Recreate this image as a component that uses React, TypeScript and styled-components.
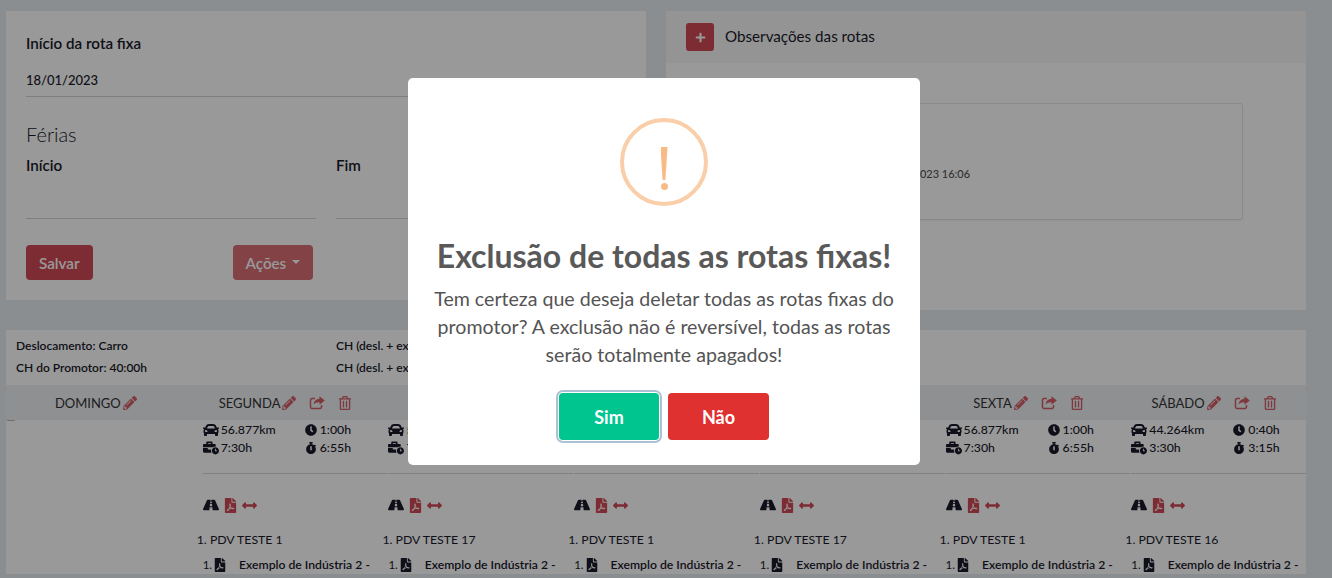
import React from "react";
import styled, { createGlobalStyle } from "styled-components";
import {
  FaBusinessTime,
  FaCar,
  FaClock,
  FaFilePdf,
  FaPencilAlt,
  FaPlus,
  FaRegTrashAlt,
  FaRoad,
  FaStopwatch,
  FaArrowsAltH,
} from "react-icons/fa";

const RED = "#d04a55";

const GlobalStyle = createGlobalStyle`
  html, body {
    margin: 0;
    padding: 0;
    height: 100%;
    overflow: hidden;
    background: #e8edf2;
    font-family: Lato, "Open Sans", sans-serif;
    color: #1a1a2b;
  }
  * { box-sizing: border-box; }
`;

const Page = styled.div`
  width: 1332px;
  height: 578px;
  padding: 11px 26px 0 6px;
  overflow: hidden;
`;

const TopRow = styled.div`
  display: grid;
  grid-template-columns: 640px 640px;
  gap: 20px;
  align-items: start;
`;

const FormCard = styled.section`
  height: 289px;
  padding: 23px 20px 0;
  background: #fff;
`;

const Label = styled.div`
  font-size: 15.2px;
  line-height: 18px;
  font-weight: 600;
`;

const DateValue = styled.div`
  margin-top: 18px;
  padding-bottom: 6px;
  font-size: 13px;
  line-height: 20px;
  font-weight: 500;
  border-bottom: 1px solid #cfd2d6;
`;

const SectionTitle = styled.h3`
  margin: 25px 0 0;
  font-size: 20px;
  line-height: 24px;
  font-weight: 300;
`;

const DateFields = styled.div`
  display: grid;
  grid-template-columns: 290px 290px;
  gap: 20px;
`;

const DateField = styled.div`
  height: 63px;
  margin-top: 10px;
  border-bottom: 1px solid #cfd2d6;
`;

const ButtonRow = styled.div`
  display: flex;
  gap: 140px;
  margin-top: 26px;
`;

const ActionButton = styled.button<{ $faded?: boolean }>`
  display: flex;
  align-items: center;
  gap: 6px;
  height: 35px;
  padding: 0 13px;
  border: 0;
  border-radius: 4px;
  background: ${RED};
  opacity: ${(p) => (p.$faded ? 0.8 : 1)};
  color: #fff;
  font-family: inherit;
  font-size: 15.2px;
  font-weight: 600;
`;

const Caret = styled.span`
  border-top: 4px solid #fff;
  border-left: 4px solid transparent;
  border-right: 4px solid transparent;
  margin-top: -2px;
`;

const NotesCard = styled.section`
  height: 299px;
  background: #fff;
`;

const NotesHeader = styled.header`
  display: flex;
  align-items: center;
  gap: 11px;
  height: 52px;
  padding: 0 20px;
  background: #f7f7f7;
`;

const NotesTitle = styled.span`
  margin-bottom: 3px;
  font-size: 15.2px;
`;

const PlusButton = styled.span`
  display: flex;
  align-items: center;
  justify-content: center;
  width: 28px;
  height: 28px;
  border-radius: 3px;
  background: ${RED};
  color: #fff;
  font-size: 11px;
`;

const NoteBox = styled.div`
  display: flex;
  align-items: center;
  width: 537px;
  height: 117px;
  margin: 40px 0 0 40px;
  padding: 23px 0 0 171px;
  border: 1px solid #e4e4e4;
  border-radius: 3px;
  box-shadow: 0 1px 2px rgba(0, 0, 0, 0.05);
  font-size: 11px;
  font-weight: 500;
  color: #555;
`;

const RoutesCard = styled.section`
  margin-top: 20px;
  background: #fff;
`;

const Summary = styled.div`
  display: grid;
  grid-template-columns: 320px 1fr;
  padding: 5px 10px 6px;
  font-size: 12px;
  line-height: 22px;
  font-weight: 600;
`;

const WeekHeader = styled.div`
  position: relative;
  display: grid;
  grid-template-columns: repeat(7, 1fr);
  height: 35px;
  background: #edf0f3;

  &::after {
    content: "";
    position: absolute;
    left: 1px;
    bottom: -1px;
    width: 8px;
    height: 1px;
    background: #b5b8bb;
  }
`;

const DayCell = styled.div<{ $inset?: number }>`
  display: flex;
  align-items: center;
  justify-content: center;
  padding-left: 2px;
  padding-right: ${(p) => p.$inset ?? 0}px;
  font-size: 13px;
  font-weight: 400;
  color: #333;
`;

const DayIcon = styled.span<{ $gap?: number }>`
  display: inline-flex;
  margin-left: ${(p) => p.$gap ?? 2}px;
  color: ${RED};
  font-size: 14px;
  opacity: 0.88;
`;

const ShareGlyph = styled.svg`
  width: 16px;
  height: 14px;
  fill: none;
  stroke: currentColor;
  stroke-width: 1.5;
`;

const ShareArrow = styled.path`
  fill: currentColor;
  stroke: none;
`;

const WeekBody = styled.div`
  display: grid;
  grid-template-columns: repeat(7, 1fr);
  overflow: hidden;
`;

const DayColumn = styled.div`
  min-width: 0;
`;

const Stats = styled.div`
  display: grid;
  grid-template-columns: 102px 1fr;
  align-content: start;
  margin: 0 -10px 0 11px;
  padding-top: 1px;
  height: 54px;
  font-size: 12.3px;
  line-height: 18px;
  font-weight: 500;
  border-bottom: 1px solid #d8d8d8;
`;

const Stat = styled.span<{ $small?: boolean }>`
  display: flex;
  align-items: center;
  gap: ${(p) => (p.$small ? 3 : 2)}px;
  white-space: nowrap;

  svg {
    font-size: ${(p) => (p.$small ? 12 : 16)}px;
    flex: none;
  }
`;

const RouteTools = styled.div`
  display: flex;
  align-items: center;
  gap: 4px;
  margin: 22px 0 0 11px;
  height: 18px;
  font-size: 15px;
`;

const Tool = styled.span<{ $red?: boolean; $size?: number }>`
  display: inline-flex;
  font-size: ${(p) => p.$size ?? 15}px;
  color: ${(p) => (p.$red ? RED : "#1a1a2b")};
`;

const StopName = styled.div`
  margin: 16px 0 0 5px;
  font-size: 12.3px;
  line-height: 20px;
  white-space: nowrap;
`;

const Industry = styled.div`
  display: flex;
  align-items: center;
  margin: 6px 0 0 11px;
  font-size: 11.5px;
  line-height: 18px;
  white-space: nowrap;
`;

const IndustryIcon = styled.span`
  display: inline-flex;
  margin: 0 12px 0 1px;
  font-size: 14px;
`;

const IndustryName = styled.span`
  font-size: 12.2px;
  font-weight: 600;
`;

const Overlay = styled.div`
  position: fixed;
  inset: 0;
  display: flex;
  justify-content: center;
  align-items: flex-start;
  padding: 78px 4px 0 0;
  background: rgba(0, 0, 0, 0.4);
`;

const Modal = styled.div`
  display: flex;
  flex-direction: column;
  align-items: center;
  width: 512px;
  height: 387px;
  padding-top: 40px;
  border-radius: 5px;
  background: #fff;
  text-align: center;
`;

const AlertIcon = styled.div`
  display: flex;
  flex-direction: column;
  align-items: center;
  width: 88px;
  height: 88px;
  padding-top: 25px;
  border: 4px solid #facea8;
  border-radius: 50%;
`;

const AlertBar = styled.span`
  width: 7px;
  height: 33px;
  background: #f8bb86;
  clip-path: polygon(0 0, 100% 0, 70% 100%, 30% 100%);
`;

const AlertDot = styled.span`
  width: 7px;
  height: 7px;
  margin-top: 3px;
  border-radius: 50%;
  background: #f8bb86;
`;

const ModalTitle = styled.h2`
  margin: 32px 0 0;
  font-size: 32px;
  line-height: 36px;
  font-weight: 700;
  color: #595959;
`;

const ModalText = styled.p`
  margin: 11px 0 0;
  width: 470px;
  font-size: 19.6px;
  line-height: 28px;
  font-weight: 400;
  color: #545454;
`;

const ModalActions = styled.div`
  display: flex;
  gap: 9px;
  margin-top: 24px;
`;

const ModalButton = styled.button<{ $tone: string; $focused?: boolean }>`
  width: ${(p) => (p.$focused ? "100px" : "101px")};
  height: 47px;
  border: 0;
  border-radius: 4px;
  background: ${(p) => p.$tone};
  box-shadow: ${(p) => (p.$focused ? "0 0 0 1px #fff, 0 0 0 3px rgba(50, 100, 150, 0.4)" : "none")};
  color: #fff;
  font-family: inherit;
  font-size: 18px;
  font-weight: 700;
`;

type DayRoute = {
  km: string;
  travel: string;
  work: string;
  visit: string;
  stop: string;
};

const routes: DayRoute[] = [
  { km: "56.877km", travel: "1:00h", work: "7:30h", visit: "6:55h", stop: "PDV TESTE 1" },
  { km: "56.877km", travel: "1:00h", work: "7:30h", visit: "6:55h", stop: "PDV TESTE 17" },
  { km: "56.877km", travel: "1:00h", work: "7:30h", visit: "6:55h", stop: "PDV TESTE 1" },
  { km: "56.877km", travel: "1:00h", work: "7:30h", visit: "6:55h", stop: "PDV TESTE 17" },
  { km: "56.877km", travel: "1:00h", work: "7:30h", visit: "6:55h", stop: "PDV TESTE 1" },
  { km: "44.264km", travel: "0:40h", work: "3:30h", visit: "3:15h", stop: "PDV TESTE 16" },
];

const days = ["SEGUNDA", "TERÇA", "QUARTA", "QUINTA", "SEXTA", "SÁBADO"];

const ShareIcon = () => (
  <ShareGlyph viewBox="0 0 16 14">
    <path d="M6 2.5H3A1.5 1.5 0 0 0 1.5 4v7A1.5 1.5 0 0 0 3 12.5h8a1.5 1.5 0 0 0 1.5-1.5V9" />
    <ShareArrow d="M15.8 4.5 10.5.3v2.4C7 2.9 4.8 5 4.5 8.8 6 6.8 8 6.2 10.5 6.3v2.4z" />
  </ShareGlyph>
);

export default function App() {
  return (
    <>
      <GlobalStyle />
      <Page>
        <TopRow>
          <FormCard>
            <Label>Início da rota fixa</Label>
            <DateValue>18/01/2023</DateValue>
            <SectionTitle>Férias</SectionTitle>
            <DateFields>
              <DateField>
                <Label>Início</Label>
              </DateField>
              <DateField>
                <Label>Fim</Label>
              </DateField>
            </DateFields>
            <ButtonRow>
              <ActionButton>Salvar</ActionButton>
              <ActionButton $faded>
                Ações <Caret />
              </ActionButton>
            </ButtonRow>
          </FormCard>
          <NotesCard>
            <NotesHeader>
              <PlusButton>
                <FaPlus />
              </PlusButton>
              <NotesTitle>Observações das rotas</NotesTitle>
            </NotesHeader>
            <NoteBox>18/01/2023 16:06</NoteBox>
          </NotesCard>
        </TopRow>
        <RoutesCard>
          <Summary>
            <span>Deslocamento: Carro</span>
            <span>CH (desl. + exec.): 47:30h</span>
            <span>CH do Promotor: 40:00h</span>
            <span>CH (desl. + exec.): 40:00h</span>
          </Summary>
          <WeekHeader>
            <DayCell $inset={8}>
              DOMINGO
              <DayIcon>
                <FaPencilAlt />
              </DayIcon>
            </DayCell>
            {days.map((day) => (
              <DayCell key={day}>
                {day}
                <DayIcon>
                  <FaPencilAlt />
                </DayIcon>
                <DayIcon $gap={13}>
                  <ShareIcon />
                </DayIcon>
                <DayIcon $gap={13}>
                  <FaRegTrashAlt />
                </DayIcon>
              </DayCell>
            ))}
          </WeekHeader>
          <WeekBody>
            <DayColumn />
            {routes.map((route, index) => (
              <DayColumn key={index}>
                <Stats>
                  <Stat>
                    <FaCar /> {route.km}
                  </Stat>
                  <Stat $small>
                    <FaClock /> {route.travel}
                  </Stat>
                  <Stat>
                    <FaBusinessTime /> {route.work}
                  </Stat>
                  <Stat $small>
                    <FaStopwatch /> {route.visit}
                  </Stat>
                </Stats>
                <RouteTools>
                  <Tool $size={16}>
                    <FaRoad />
                  </Tool>
                  <Tool $red>
                    <FaFilePdf />
                  </Tool>
                  <Tool $red>
                    <FaArrowsAltH />
                  </Tool>
                </RouteTools>
                <StopName>1. {route.stop}</StopName>
                <Industry>
                  1.
                  <IndustryIcon>
                    <FaFilePdf />
                  </IndustryIcon>
                  <IndustryName>Exemplo de Indústria 2 -</IndustryName>
                </Industry>
              </DayColumn>
            ))}
          </WeekBody>
        </RoutesCard>
      </Page>
      <Overlay>
        <Modal>
          <AlertIcon>
            <AlertBar />
            <AlertDot />
          </AlertIcon>
          <ModalTitle>Exclusão de todas as rotas fixas!</ModalTitle>
          <ModalText>
            Tem certeza que deseja deletar todas as rotas fixas do promotor? A exclusão não é
            reversível, todas as rotas serão totalmente apagados!
          </ModalText>
          <ModalActions>
            <ModalButton $tone="#00c58f" $focused>
              Sim
            </ModalButton>
            <ModalButton $tone="#e03131">Não</ModalButton>
          </ModalActions>
        </Modal>
      </Overlay>
    </>
  );
}
